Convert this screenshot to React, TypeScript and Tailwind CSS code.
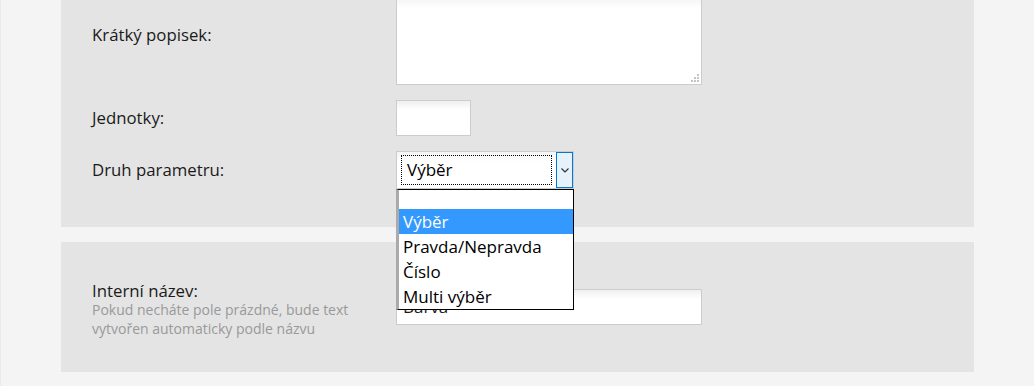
const inputBox = 'border border-[#cccccc] bg-[linear-gradient(to_bottom,#efefef,#ffffff_9px)]';

const options = ['', 'Výběr', 'Pravda/Nepravda', 'Číslo', 'Multi výběr'];

const App = () => {
  return (
    <div className="h-[386px] w-[1034px] overflow-hidden bg-[#f4f4f4] border-l border-[#ebebeb] text-[#1a1a1a]" style={{ fontFamily: '"Open Sans", "Noto Sans", sans-serif' }}>
      <div className="mx-[60px] mt-[-40px] bg-[#e4e4e4] pl-[31px] pt-[39px] pb-[38px]">
        <div className="flex">
          <div className="w-[304px] pt-[23px] text-[16.8px]">Krátký popisek:</div>
          <div className="relative h-[86px] w-[306px] border border-[#cccccc] bg-[linear-gradient(to_bottom,#f6f6f6,#ffffff_8px)]">
            <svg className="absolute right-[2px] bottom-[2px]" width="8" height="8" viewBox="0 0 8 8">
              <rect x="6" y="0" width="2" height="2" fill="#c4c4c4" />
              <rect x="3" y="3" width="2" height="2" fill="#c4c4c4" />
              <rect x="6" y="3" width="2" height="2" fill="#c4c4c4" />
              <rect x="0" y="6" width="2" height="2" fill="#c4c4c4" />
              <rect x="3" y="6" width="2" height="2" fill="#c4c4c4" />
              <rect x="6" y="6" width="2" height="2" fill="#c4c4c4" />
            </svg>
          </div>
        </div>
        <div className="mt-[15px] flex items-center">
          <div className="w-[304px] text-[16.8px]">Jednotky:</div>
          <div className={`h-[36px] w-[75px] ${inputBox}`} />
        </div>
        <div className="mt-[15px] flex items-center">
          <div className="w-[304px] text-[16.8px]">Druh parametru:</div>
          <div className="relative flex h-[38px] w-[178px] border border-[#cccccc] bg-[linear-gradient(to_bottom,#f4f4f4,#ffffff_10px)]">
            <div className="ml-[4px] mt-[3px] flex h-[30px] w-[151px] items-center border border-dotted border-black pl-[5px] text-[17px] text-black">Výběr</div>
            <div className="ml-[4px] flex h-[36px] w-[17px] items-center justify-center border border-[#0078d7] bg-[#e5f1fb]">
              <svg width="8" height="5" viewBox="0 0 8 5">
                <polyline points="0.5,0.5 4,4 7.5,0.5" fill="none" stroke="#333333" strokeWidth="1.2" />
              </svg>
            </div>
            <div className="absolute left-[-1px] top-[37px] z-10 w-[178px] border border-black border-l-[3px] border-l-[#aaaaaa] bg-white text-[17px] text-black">
              {options.map((o, i) => (
                <div key={i} className={`${i === 0 ? 'h-[19px]' : 'h-[25px]'} flex items-center pl-[4px] leading-none ${o === 'Výběr' ? 'bg-[#3399ff] text-white' : ''}`}>
                  {o}
                </div>
              ))}
            </div>
          </div>
        </div>
      </div>
      <div className="mx-[60px] mt-[15px] flex h-[130px] items-center bg-[#e4e4e4] pl-[31px]">
        <div className="w-[304px] pt-[4px]">
          <div className="text-[16.8px] leading-[19px]">Interní název:</div>
          <div className="text-[14px] leading-[19px] text-[#999999]">
            Pokud necháte pole prázdné, bude text
            <br />
            vytvořen automaticky podle názvu
          </div>
        </div>
        <div className={`flex h-[36px] w-[306px] items-center pl-[6px] text-[17px] ${inputBox}`}>Barva</div>
      </div>
    </div>
  );
};

export default App;
